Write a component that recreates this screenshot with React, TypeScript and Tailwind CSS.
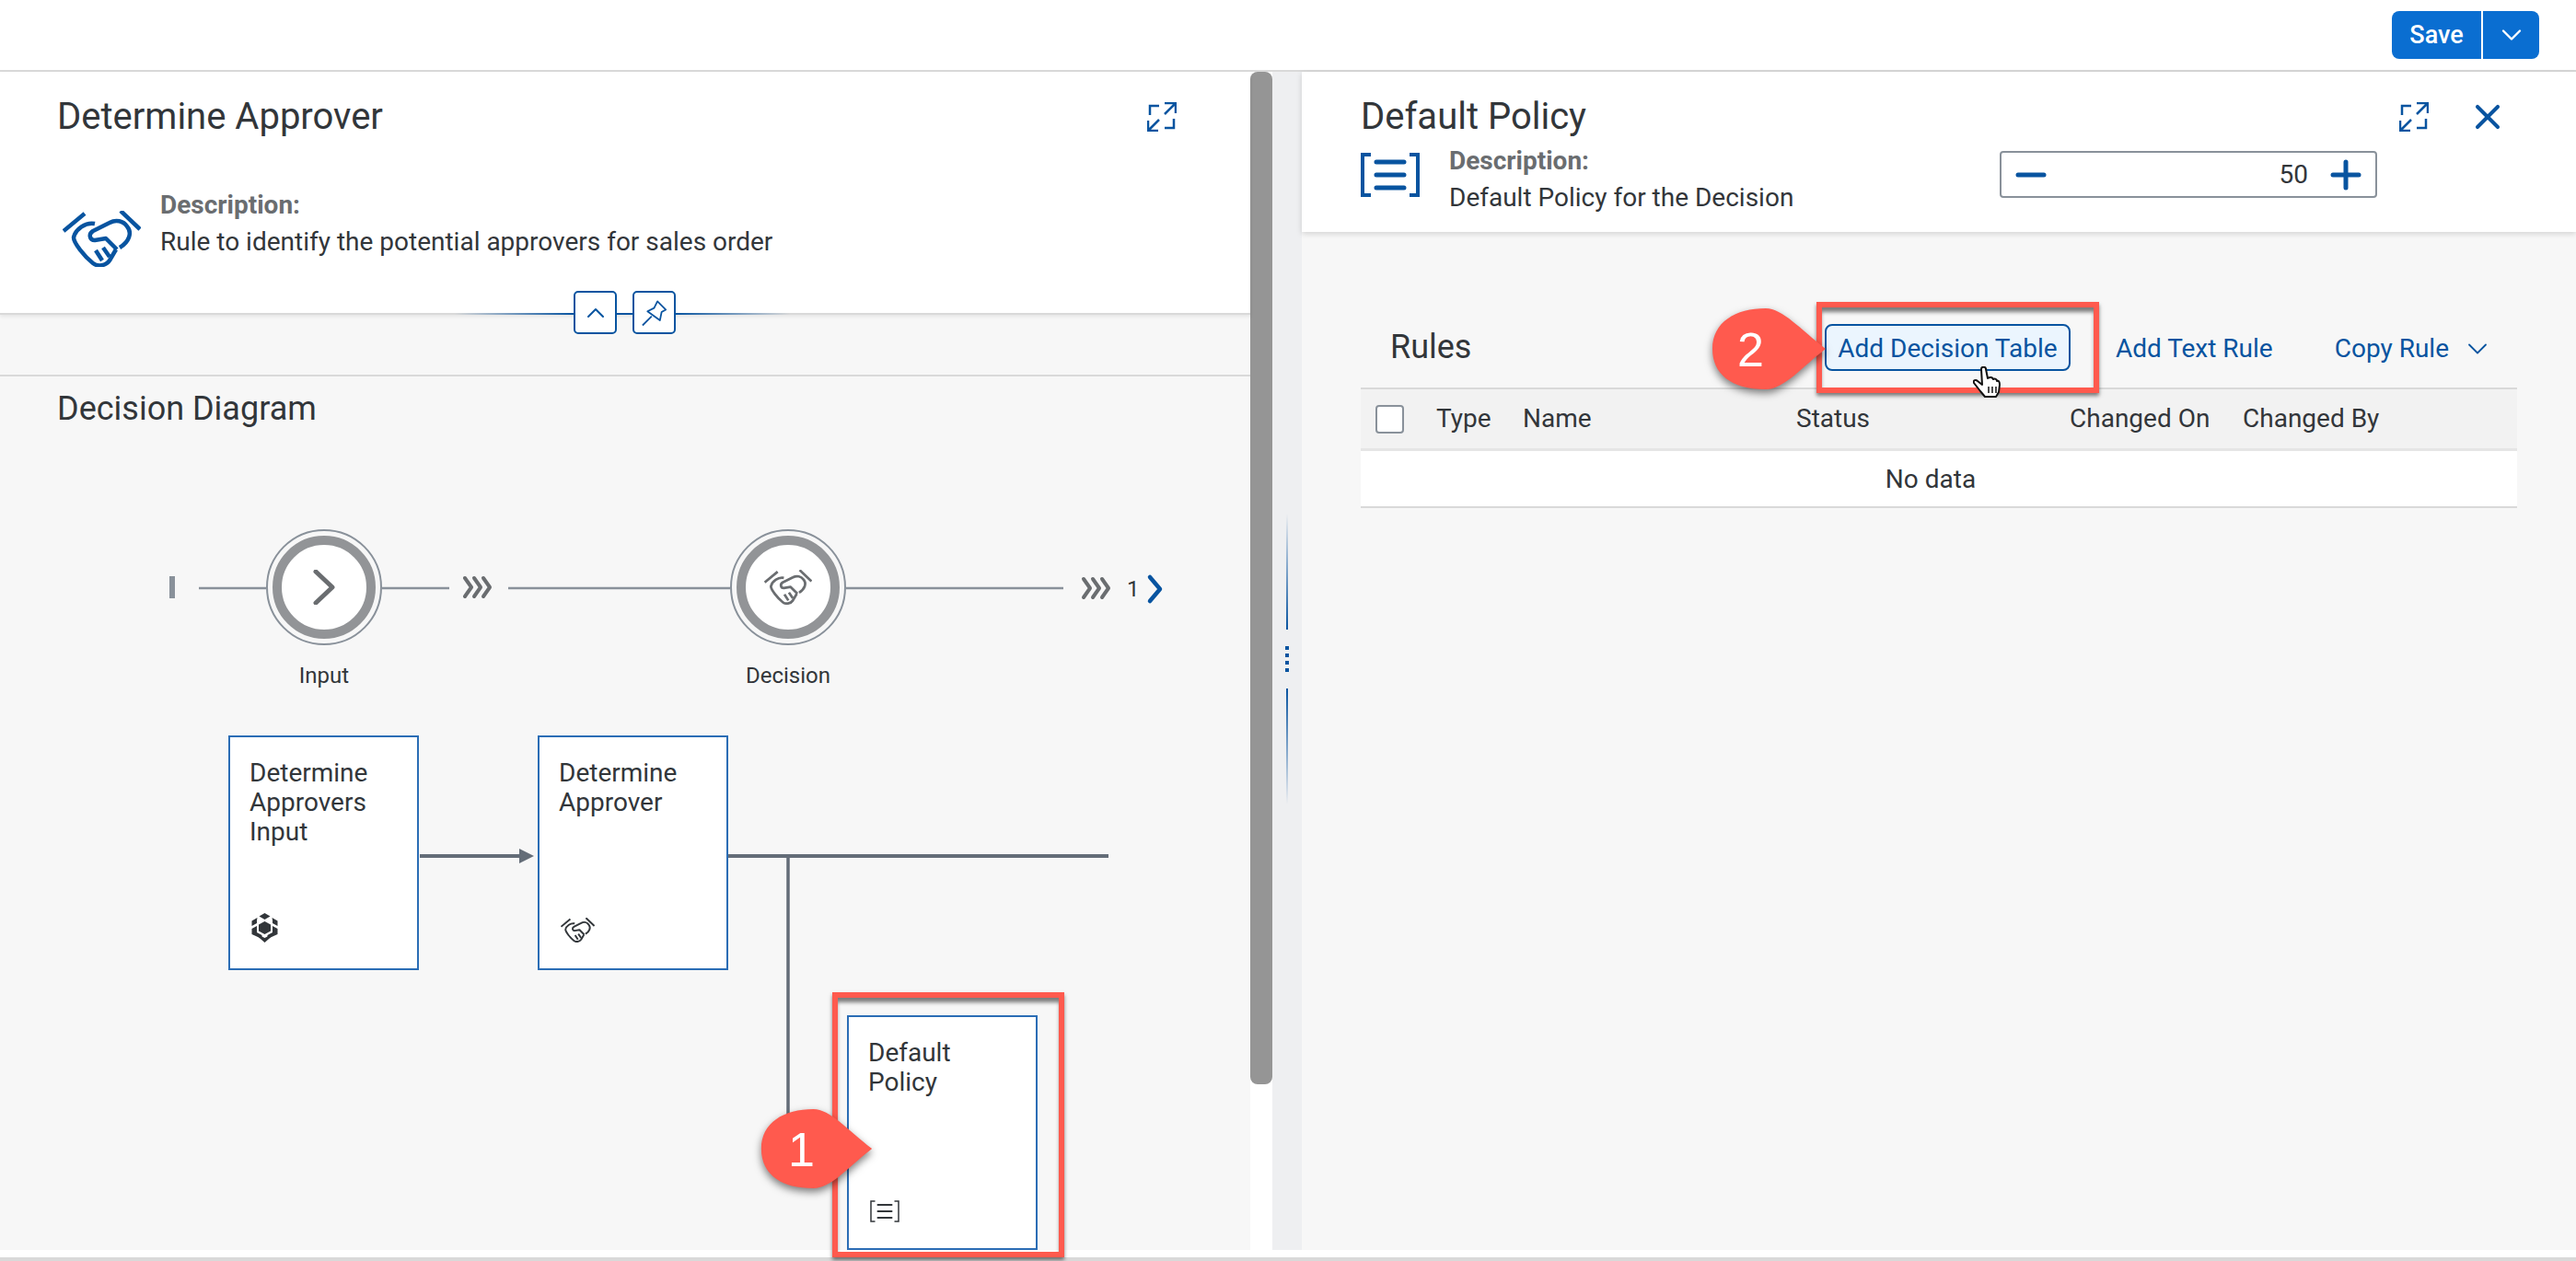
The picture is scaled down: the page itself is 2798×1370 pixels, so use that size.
import { ChevronDown, ChevronUp, Minus, Plus, X } from "lucide-react";

const font = "font-['Roboto',sans-serif]";

function Handshake({ className }: { className: string }) {
  return (
    <svg viewBox="0 0 85 61" fill="none" stroke="currentColor" strokeWidth="4.5" strokeLinejoin="round" className={className}>
      <path d="M1 22 L24 3 M63 0 L84 20" />
      <path d="M35 14 C25 12 14 20 12 29 C12 35 24 50 33 57 C38 61 47 60 51 54 L58 42" />
      <path d="M62 40 C72 34 76 24 70 17 C66 11 58 9 51 13 L33 22 C28 25 29 32 35 32 L47 30 L59 42" />
      <path d="M36 43 L43 54 M44 40 L51 50" />
    </svg>
  );
}

function RuleIcon({ className, width = 4 }: { className: string; width?: number }) {
  return (
    <svg viewBox="0 0 64 48" fill="none" stroke="currentColor" strokeWidth={width} className={className}>
      <path d="M11 2 H2 V46 H11 M53 2 H62 V46 H53" />
      <path d="M17 10 H47 M17 24 H47 M17 38 H47" strokeWidth={width + 1} strokeLinecap="round" />
    </svg>
  );
}

function ExpandIcon() {
  return (
    <svg viewBox="0 0 32 32" fill="none" stroke="#0854a0" strokeWidth="2.5" className="w-[32px] h-[32px]">
      <path d="M13 4 H3 V14 M29 18 V28 H19" />
      <path d="M19 1 H31 V12 M31 1 L19 13 M1 20 V31 H12 M1 31 L13 19" />
    </svg>
  );
}

function CubeIcon() {
  return (
    <svg viewBox="0 0 28 32" fill="#32363a" className="w-[29px] h-[32px]">
      <path d="M14 0 L20 3.5 L14 7 L8 3.5 Z" />
      <path d="M6 5 L0 8.5 V14 L5.5 11 V8 Z M22 5 L28 8.5 V14 L22.5 11 V8 Z" />
      <path d="M14 9 L20.5 12.5 V19.5 L14 23 L7.5 19.5 V12.5 Z" />
      <path d="M0 17 L5.5 14 V21 L11 24 V28 L0 23 Z M28 17 L22.5 14 V21 L17 24 V28 L28 23 Z" />
      <path d="M6 23 L14 27 L22 23 V25 L14 32 L6 25 Z" />
    </svg>
  );
}

function Callout({ n, className, digit }: { n: string; className: string; digit: string }) {
  return (
    <div className={`absolute ${className}`}>
      <svg viewBox="0 0 124 90" className="w-full h-full overflow-visible drop-shadow-[0_4px_4px_rgba(0,0,0,0.5)]">
        <path fill="#ff5a4e" d="M58 1 C76 1 96 24 123 45 C98 64 78 89 58 89 C20 89 0 72 0 45 C0 16 25 1 58 1 Z" />
      </svg>
      <span className={`absolute font-['Liberation_Sans',sans-serif] text-white leading-none ${digit}`}>{n}</span>
    </div>
  );
}

function Node({ lines, className, icon }: { lines: string[]; className: string; icon: React.ReactNode }) {
  return (
    <div className={`absolute w-[207px] h-[255px] bg-white border-2 border-[#2b6db5] pl-[21px] pt-[23px] text-[28px] leading-[32px] text-[#32363a] ${className}`}>
      {lines.map((l) => (
        <div key={l}>{l}</div>
      ))}
      <div className="absolute left-[23px] bottom-[28px]">{icon}</div>
    </div>
  );
}

function Step({ label, className, icon }: { label: string; className: string; icon: React.ReactNode }) {
  return (
    <div className={`absolute top-[166px] w-[126px] h-[126px] ${className}`}>
      <div className="w-full h-full rounded-full border-2 border-[#89919a] p-[5px] bg-[#f7f7f7]">
        <div className="w-full h-full rounded-full border-[10px] border-[#929497] bg-white flex items-center justify-center">
          {icon}
        </div>
      </div>
      <div className="absolute top-[146px] left-0 right-0 text-center text-[24px] leading-[26px] text-[#32363a]">{label}</div>
    </div>
  );
}

const chevrons = (x: number, y: number) => (
  <g fill="none" stroke="#6a6d70" strokeWidth="4" strokeLinecap="round" strokeLinejoin="round">
    <path d={`M${x + 2} ${y + 2} L${x + 9} ${y + 12} L${x + 2} ${y + 22}`} />
    <path d={`M${x + 12} ${y + 2} L${x + 19} ${y + 12} L${x + 12} ${y + 22}`} />
    <path d={`M${x + 22} ${y + 2} L${x + 29} ${y + 12} L${x + 22} ${y + 22}`} />
  </g>
);

export default function App() {
  return (
    <div className={`relative w-[2798px] h-[1370px] bg-white overflow-hidden flex flex-col ${font}`}>
      {/* Top bar */}
      <div className="h-[78px] shrink-0 border-b-2 border-[#d9d9d9] flex items-start justify-end pr-[40px] pt-[12px]">
        <div className="flex h-[52px] rounded-[8px] overflow-hidden bg-[#0a6ed1] text-white">
          <div className="w-[97px] flex items-center justify-center text-[27px] font-medium">Save</div>
          <div className="w-[2px] bg-white" />
          <div className="w-[61px] flex items-center justify-center">
            <ChevronDown size={36} strokeWidth={1.6} />
          </div>
        </div>
      </div>

      <div className="flex h-[1280px] shrink-0">
        {/* Left panel */}
        <div className="relative w-[1358px] shrink-0 flex flex-col bg-[#f7f7f7]">
          <div className="relative h-[264px] shrink-0 bg-white border-b-2 border-[#d9d9d9] shadow-[0_2px_4px_rgba(0,0,0,0.08)]">
            <div className="flex items-center justify-between pl-[62px] pr-[80px] pt-[29px] h-[69px]">
              <div className="text-[40px] leading-[40px] text-[#32363a]">Determine Approver</div>
              <ExpandIcon />
            </div>
            <div className="flex pl-[68px] mt-[57px] gap-[21px]">
              <Handshake className="w-[85px] h-[61px] mt-[25px] text-[#0854a0]" />
              <div className="text-[28px] leading-[40px] -mt-[1px]">
                <div className="font-bold text-[#6a6d70]">Description:</div>
                <div className="text-[#32363a]">Rule to identify the potential approvers for sales order</div>
              </div>
            </div>
          </div>
          <div className="h-[67px] shrink-0 border-b-2 border-[#d9d9d9]" />
          {/* Diagram */}
          <div className="relative flex-1">
            <div className="pl-[62px] pt-[15px] text-[36px] leading-[40px] text-[#32363a]">Decision Diagram</div>
            <svg viewBox="0 0 1358 949" className="absolute inset-0 w-[1358px] h-[949px]">
              <rect x="184" y="217" width="6" height="24" fill="#89919a" />
              <path d="M216 230 H289 M415 230 H488 M552 230 H793 M919 230 H1155" stroke="#89919a" strokeWidth="2.5" fill="none" />
              {chevrons(503, 217)}
              {chevrons(1175, 218)}
              <path d="M1249 218 L1260 231 L1249 244" fill="none" stroke="#0854a0" strokeWidth="4.5" strokeLinecap="round" strokeLinejoin="round" />
              <path d="M456 521 H566 M791 521 H1204 " stroke="#646d78" strokeWidth="4" fill="none" />
              <path d="M856 521 V831" stroke="#646d78" strokeWidth="3.5" fill="none" />
              <path d="M564 513 L580 521 L564 529 Z" fill="#646d78" />
            </svg>
            <div className="absolute left-[1224px] top-[217px] text-[24px] leading-[28px] text-[#32363a]">1</div>
            <Step
              label="Input"
              className="left-[289px]"
              icon={
                <svg viewBox="0 0 24 38" fill="none" stroke="#6a6d70" strokeWidth="5" strokeLinecap="round" strokeLinejoin="round" className="w-[24px] h-[38px]">
                  <path d="M3 2 L21 19 L3 36" />
                </svg>
              }
            />
            <Step label="Decision" className="left-[793px]" icon={<Handshake className="w-[52px] h-[38px] text-[#6a6d70]" />} />
            <Node className="left-[248px] top-[390px]" lines={["Determine", "Approvers", "Input"]} icon={<CubeIcon />} />
            <Node className="left-[584px] top-[390px]" lines={["Determine", "Approver"]} icon={<Handshake className="w-[37px] h-[27px] text-[#32363a]" />} />
            <Node className="left-[920px] top-[694px]" lines={["Default", "Policy"]} icon={<RuleIcon className="w-[32px] h-[24px] text-[#32363a]" width={3} />} />
          </div>
          {/* Collapse / pin */}
          <div className="absolute left-[494px] top-[262px] w-[129px] h-[2px] bg-gradient-to-r from-transparent to-[#0854a0]" />
          <div className="absolute left-[670px] top-[262px] w-[17px] h-[2px] bg-[#0854a0]" />
          <div className="absolute left-[734px] top-[262px] w-[124px] h-[2px] bg-gradient-to-l from-transparent to-[#0854a0]" />
          <div className="absolute left-[623px] top-[238px] w-[47px] h-[47px] rounded-[5px] border-2 border-[#0854a0] bg-white flex items-center justify-center text-[#0854a0]">
            <ChevronUp size={32} strokeWidth={1.5} />
          </div>
          <div className="absolute left-[687px] top-[238px] w-[47px] h-[47px] rounded-[5px] border-2 border-[#0854a0] bg-white flex items-center justify-center">
            <svg viewBox="0 0 30 32" fill="none" stroke="#0854a0" strokeWidth="2" strokeLinejoin="round" className="w-[27px] h-[30px]">
              <path d="M1 31 L12 20 M19 2 L29 12 L24 15 L22 25 L7 14 L15 10 Z" />
            </svg>
          </div>
        </div>

        {/* Scrollbar */}
        <div className="w-[24px] shrink-0 bg-white">
          <div className="h-[1100px] bg-[#959595] rounded-[8px]" />
        </div>

        {/* Splitter */}
        <div className="w-[32px] shrink-0 bg-[#eeeff1] flex flex-col items-center pt-[480px]">
          <div className="w-[2px] h-[126px] bg-gradient-to-b from-transparent to-[#0854a0]" />
          <div className="flex flex-col gap-[4px] mt-[18px]">
            <div className="w-[4px] h-[4px] bg-[#0854a0]" />
            <div className="w-[4px] h-[4px] bg-[#0854a0]" />
            <div className="w-[4px] h-[4px] bg-[#0854a0]" />
            <div className="w-[4px] h-[4px] bg-[#0854a0]" />
          </div>
          <div className="w-[2px] h-[126px] mt-[18px] bg-gradient-to-t from-transparent to-[#0854a0]" />
        </div>

        {/* Right panel */}
        <div className="flex-1 flex flex-col bg-[#f7f7f7]">
          <div className="h-[174px] shrink-0 bg-white shadow-[0_2px_6px_rgba(0,0,0,0.15)] pl-[64px] pr-[74px] pt-[29px]">
            <div className="flex items-center justify-between h-[40px]">
              <div className="text-[40px] leading-[40px] text-[#32363a]">Default Policy</div>
              <div className="flex items-center gap-[42px]">
                <ExpandIcon />
                <X size={44} strokeWidth={2.2} className="text-[#0854a0]" />
              </div>
            </div>
            <div className="flex items-start mt-[19px]">
              <RuleIcon className="w-[64px] h-[48px] shrink-0 text-[#0854a0]" />
              <div className="w-[630px] shrink-0 pl-[32px] text-[28px] leading-[40px] -mt-[11px]">
                <div className="font-bold text-[#6a6d70]">Description:</div>
                <div className="text-[#32363a]">Default Policy for the Decision</div>
              </div>
              <div className="w-[410px] h-[51px] -mt-[2px] rounded-[4px] border-2 border-[#89919a] flex items-center justify-between pl-[8px] pr-[8px] text-[#32363a]">
                <Minus size={48} strokeWidth={2.5} className="text-[#0854a0]" />
                <div className="flex items-center gap-[17px]">
                  <span className="text-[28px]">50</span>
                  <Plus size={48} strokeWidth={2.5} className="text-[#0854a0]" />
                </div>
              </div>
            </div>
          </div>

          <div className="mx-[64px]">
            <div className="flex items-center h-[51px] mt-[100px] mb-[18px] pl-[32px] pr-[25px] text-[#0854a0] text-[28px]">
              <div className="flex-1 text-[36px] text-[#32363a] -mt-[2px]">Rules</div>
              <div className="w-[267px] h-[51px] pt-[2px] rounded-[8px] border-2 border-[#0854a0] bg-[#ebf5fe] flex items-center justify-center">Add Decision Table</div>
              <div className="ml-[49px] pt-[2px]">Add Text Rule</div>
              <div className="ml-[67px] pt-[2px] flex items-center gap-[13px]">
                Copy Rule
                <ChevronDown size={36} strokeWidth={1.2} />
              </div>
            </div>
            <div className="grid grid-cols-[82px_94px_297px_297px_188px_1fr] items-center h-[69px] bg-[#f2f2f2] border-t-2 border-b-[3px] border-t-[#d9d9d9] border-b-[#e5e5e5] text-[28px] text-[#32363a]">
              <div className="pl-[16px]">
                <div className="w-[31px] h-[31px] rounded-[4px] border-2 border-[#89919a] bg-white" />
              </div>
              <div>Type</div>
              <div>Name</div>
              <div>Status</div>
              <div>Changed On</div>
              <div>Changed By</div>
            </div>
            <div className="h-[62px] bg-white border-b-2 border-[#d9d9d9] flex items-center justify-center pr-[18px] pt-[2px] text-[28px] text-[#32363a]">No data</div>
          </div>
        </div>
      </div>

      <div className="h-[8px] bg-white" />
      <div className="h-[4px] bg-[#d9d9d9]" />

      {/* Annotations */}
      <div className="absolute left-[904px] top-[1078px] w-[252px] h-[288px] border-[6px] border-[#ff5a4e] shadow-[0_3px_4px_rgba(0,0,0,0.5),inset_0_6px_4px_-1px_rgba(0,0,0,0.5)]" />
      <div className="absolute left-[1973px] top-[328px] w-[307px] h-[99px] border-[6px] border-[#ff5a4e] shadow-[0_3px_4px_rgba(0,0,0,0.5),inset_0_6px_4px_-1px_rgba(0,0,0,0.5)]" />
      <Callout n="1" className="left-[826px] top-[1204px] w-[123px] h-[88px]" digit="left-[30px] top-[19px] text-[52px]" />
      <Callout n="2" className="left-[1860px] top-[334px] w-[124px] h-[90px]" digit="left-[27px] top-[20px] text-[52px]" />

      {/* Pointer */}
      <svg viewBox="0 0 30 34" className="absolute left-[2143px] top-[398px] w-[30px] h-[34px]" fill="#fff" stroke="#111" strokeWidth="2" strokeLinejoin="round">
        <path d="M9 3 C9 0 14 0 14 3 L16 13 C19 11 21 12 22 14 C24 13 26 14 26 16 C28 15 29 17 29 20 L28 28 L25 33 H13 L8 27 L1 18 C0 15 3 14 5 16 L10 20 Z" />
        <path d="M17 22 V29 M21 22 V29 M25 22 V29" fill="none" strokeWidth="1.5" />
      </svg>
    </div>
  );
}
